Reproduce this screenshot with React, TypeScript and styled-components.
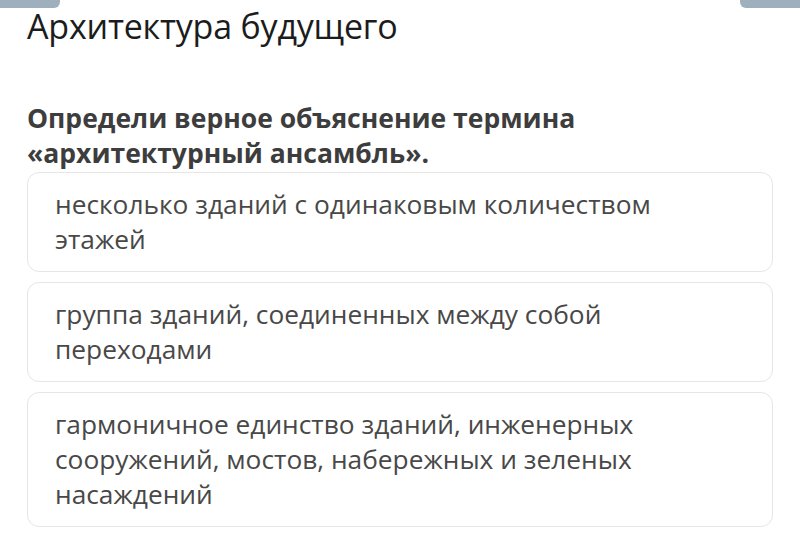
import { createGlobalStyle, styled } from 'styled-components';

const GlobalStyle = createGlobalStyle`
  html, body {
    margin: 0;
    padding: 0;
    background: #ffffff;
  }

  body {
    font-family: 'Open Sans', 'Noto Sans', sans-serif;
  }
`;

const options = [
  'несколько зданий с одинаковым количеством этажей',
  'группа зданий, соединенных между собой переходами',
  'гармоничное единство зданий, инженерных сооружений, мостов, набережных и зеленых насаждений',
];

const App = () => {
  return (
    <Page>
      <GlobalStyle />
      <TopBar>
        <Tab side="left" />
        <Tab side="right" />
      </TopBar>
      <Content>
        <Title>Архитектура будущего</Title>
        <Question>Определи верное объяснение термина «архитектурный ансамбль».</Question>
        <Options>
          {options.map((text) => (
            <Option key={text}>{text}</Option>
          ))}
        </Options>
      </Content>
    </Page>
  );
};

const Page = styled.div`
  width: 800px;
  height: 544px;
  position: relative;
  overflow: hidden;
  background: #fff;
`;

const TopBar = styled.div`
  position: absolute;
  top: 0;
  left: 0;
  right: 0;
  display: flex;
  justify-content: space-between;
`;

const Tab = styled.div<{ side: 'left' | 'right' }>`
  width: 60px;
  height: 8px;
  background: #9eb0bd;
  border-radius: ${({ side }) => (side === 'left' ? '0 0 6px 0' : '0 0 0 6px')};
`;

const Content = styled.div`
  display: flex;
  flex-direction: column;
  padding: 4px 27px 0;
`;

const Title = styled.h1`
  margin: 0;
  font-size: 34px;
  line-height: 44px;
  font-weight: 400;
  color: #1c1c1c;
  letter-spacing: -0.2px;
`;

const Question = styled.h2`
  margin: 53px 0 0;
  font-size: 26.5px;
  line-height: 35px;
  font-weight: 700;
  color: #3d3d3d;
`;

const Options = styled.div`
  display: flex;
  flex-direction: column;
  gap: 10px;
  margin-top: 1px;
`;

const Option = styled.div`
  border: 1.5px solid #e6e6e6;
  border-radius: 12px;
  padding: 14px 48px 14px 27px;
  font-size: 26.3px;
  line-height: 35px;
  color: #484848;
`;

export default App;
